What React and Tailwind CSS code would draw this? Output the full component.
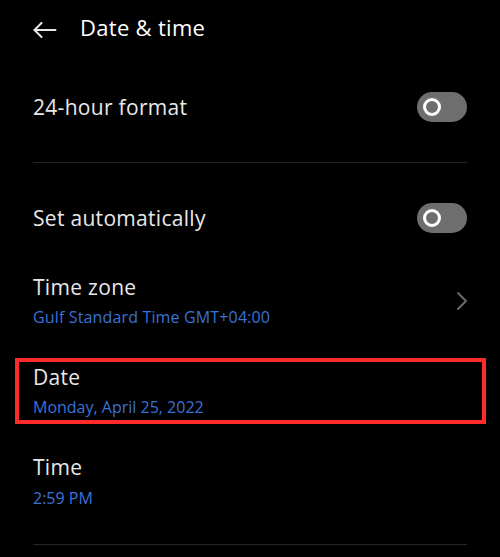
import React from 'react';

function Toggle() {
  return (
    <div className="w-[50px] h-[30px] rounded-full bg-[#6e6e6e] flex items-center pl-[6px] shrink-0">
      <div className="w-[18px] h-[18px] rounded-full border-[3px] border-white" />
    </div>
  );
}

function Chevron() {
  return (
    <svg width="12" height="20" viewBox="0 0 12 20" fill="none" className="shrink-0 mr-[-1px]">
      <polyline points="2,2 10,10 2,18" stroke="#6a6a6a" strokeWidth="2" strokeLinecap="round" strokeLinejoin="round" />
    </svg>
  );
}

function Divider({ className }) {
  return <div className={`h-px bg-[#262626] ${className}`} />;
}

export default function App() {
  return (
    <div className="w-[500px] h-[557px] bg-black text-[#e8e8e8] overflow-hidden" style={{ fontFamily: '"Open Sans", Roboto, sans-serif' }}>
      <div className="px-[33px]">
        {/* header */}
        <div className="h-[57px] flex items-center">
          <svg width="24" height="16" viewBox="0 0 24 16" fill="none" className="mt-[2px]">
            <line x1="1.5" y1="8" x2="22.5" y2="8" stroke="#e8e8e8" strokeWidth="2" strokeLinecap="round" />
            <polyline points="8.5,1 1.5,8 8.5,15" stroke="#e8e8e8" strokeWidth="2" strokeLinecap="round" strokeLinejoin="round" />
          </svg>
          <h1 className="ml-[23px] -mt-[3px] text-[22px] leading-[30px] font-medium tracking-[0.3px] text-white">Date &amp; time</h1>
        </div>

        {/* 24-hour format */}
        <div className="mt-[20px] h-[60px] flex items-center justify-between">
          <span className="text-[21px] leading-[30px] tracking-[0.3px]">24-hour format</span>
          <Toggle />
        </div>

        <Divider className="mt-[25px]" />

        {/* Set automatically */}
        <div className="mt-[25px] h-[60px] flex items-center justify-between">
          <span className="text-[21px] leading-[30px] tracking-[0.3px]">Set automatically</span>
          <Toggle />
        </div>

        {/* Time zone */}
        <div className="mt-[24px] flex items-center justify-between">
          <div className="flex flex-col">
            <span className="text-[21px] leading-[30px] tracking-[0.3px]">Time zone</span>
            <span className="mt-[3px] text-[16px] leading-[24px] tracking-[0.15px] text-[#3a72d8]">Gulf Standard Time GMT+04:00</span>
          </div>
          <Chevron />
        </div>

        {/* Date (highlighted) */}
        <div className="mt-[29px] -ml-[18px] -mr-[19px] border-4 border-[#ff2b2b] pl-[14px] flex flex-col">
          <span className="text-[21px] leading-[30px] tracking-[0.3px]">Date</span>
          <span className="mt-[3px] mb-[1px] text-[16px] leading-[24px] text-[#3a72d8]">Monday, April 25, 2022</span>
        </div>

        {/* Time */}
        <div className="mt-[28px] flex flex-col">
          <span className="text-[21px] leading-[30px] tracking-[0.3px]">Time</span>
          <span className="mt-[4px] text-[16px] leading-[24px] text-[#3a72d8]">2:59 PM</span>
        </div>

        <Divider className="mt-[34px]" />
      </div>
    </div>
  );
}
